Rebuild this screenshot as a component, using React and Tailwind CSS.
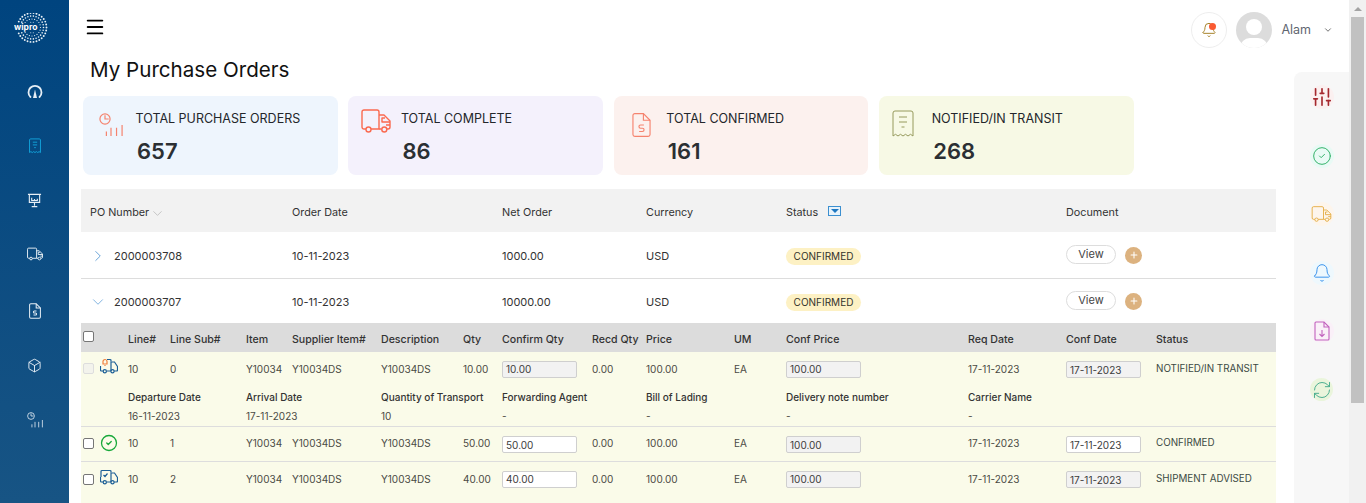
// My Purchase Orders page
import { Bell, Box, ChevronDown, ChevronRight, CircleCheck, Menu, Plus, RefreshCw, SlidersVertical } from 'lucide-react';

const font = { fontFamily: 'Inter, "Noto Sans", sans-serif' };

// clock + bars, used on the first card and in the sidebar
function ReportIcon({ className }) {
  return (
    <svg viewBox="0 0 26 26" fill="none" stroke="currentColor" strokeWidth="1.300" className={className}>
      <circle cx="6.500" cy="6.500" r="5.500" />
      <path d="M6.500 2.500v4h4" />
      <path d="M8 25v-5M13 25v-9M19 25v-9M25 25V13" />
    </svg>
  );
}

function ReceiptIcon({ className, strokeWidth = 1 }) {
  return (
    <svg viewBox="0 0 22 28" fill="none" stroke="currentColor" strokeWidth={strokeWidth} className={className}>
      <path d="M1 26V3a2 2 0 0 1 2-2h16a2 2 0 0 1 2 2v23l-2.500-1.700-2.500 1.700-2.500-1.700L11 26l-2.500-1.700L6 26l-2.500-1.700z" />
      <path d="M7 7h8M7 12h8M9.500 17h3" />
    </svg>
  );
}

function DollarFileIcon({ className, strokeWidth = 1.200 }) {
  return (
    <svg viewBox="0 0 20 26" fill="none" stroke="currentColor" strokeWidth={strokeWidth} className={className}>
      <path d="M12 1H3a2 2 0 0 0-2 2v20a2 2 0 0 0 2 2h14a2 2 0 0 0 2-2V8z" />
      <path d="M12 1v7h7" />
      <path d="M12.500 13h-3.500a1.700 1.700 0 0 0 0 3.400h2a1.700 1.700 0 0 1 0 3.400H7.500" />
    </svg>
  );
}

function DownloadFileIcon({ className }) {
  return (
    <svg viewBox="0 0 16 20" fill="none" stroke="currentColor" strokeWidth="1.100" className={className}>
      <path d="M10 1H2a1 1 0 0 0-1 1v16a1 1 0 0 0 1 1h12a1 1 0 0 0 1-1V6z" />
      <path d="M10 1v5h5" />
      <path d="M8 9v6M5.500 13 8 15.500 10.500 13" />
    </svg>
  );
}

function GaugeIcon({ className }) {
  return (
    <svg viewBox="0 0 16 16" fill="none" className={className}>
      <path d="M3.500 13A6.500 6.500 0 1 1 12.500 13" stroke="currentColor" strokeWidth="1.800" strokeLinecap="round" />
      <path d="M8 5.500 10 14H6z" fill="currentColor" />
    </svg>
  );
}

function BoardIcon({ className }) {
  return (
    <svg viewBox="0 0 16 16" fill="none" stroke="currentColor" strokeWidth="1.200" className={className}>
      <path d="M1 1.500h14M2.500 1.500v8.500h11V1.500M8 10v3.500M5 14.500h6" />
      <path d="M5 5v3h6V6M8 8V6.500" />
    </svg>
  );
}

function TruckIcon({ className, strokeWidth = 1.300 }) {
  return (
    <svg viewBox="0 0 30 24" fill="none" stroke="currentColor" strokeWidth={strokeWidth} strokeLinejoin="round" className={className}>
      <path d="M5 20H3a2 2 0 0 1-2-2V3a2 2 0 0 1 2-2h13a2 2 0 0 1 2 2v17H10" />
      <path d="M18 6h5l6 6v6a2 2 0 0 1-2 2h-1M20.500 20H18" />
      <path d="M24 9h-3v4h8M25 16h4" />
      <circle cx="7.500" cy="20.500" r="2.500" />
      <circle cx="23.300" cy="20.500" r="2.500" />
    </svg>
  );
}

// delivery van with a small overlay, for the line status column
function VanIcon({ children }) {
  return (
    <svg viewBox="0 0 18 16" fill="none" stroke="#1c5f96" strokeWidth="1.200" className="w-[18px] h-4">
      <path d="M3 13H1.500a1 1 0 0 1-1-1V8M6.500 13h4.500M14 13h2.500a1 1 0 0 0 1-1V8.500L14.500 4H11v9" />
      <path d="M11 3.500V2.500a1 1 0 0 0-1-1H7" />
      <circle cx="4.800" cy="13.300" r="1.600" />
      <circle cx="12.500" cy="13.300" r="1.600" />
      {children}
    </svg>
  );
}

function WiproLogo() {
  const rings = [
    { r: 14.5, n: 30, s: 0.95 },
    { r: 11.5, n: 26, s: 0.8 },
    { r: 8.5, n: 20, s: 0.6 },
    { r: 5.5, n: 14, s: 0.5 },
  ];
  return (
    <svg viewBox="0 0 36 30" className="w-9 h-[30px]">
      {rings.map((ring) =>
        Array.from({ length: ring.n }).map((_, i) => {
          const a = (i / ring.n) * Math.PI * 2;
          const x = 18 + Math.cos(a) * ring.r;
          const y = 14.5 + Math.sin(a) * ring.r;
          // the word covers the left side of the rings
          if (x < 24 && Math.abs(y - 14.5) < 4.5) return null;
          return <circle key={ring.r + '-' + i} cx={x} cy={y} r={ring.s} fill="#eaf1f7" />;
        })
      )}
      <text x="0" y="17" fontSize="8.500" fontWeight="700" fill="#fff" style={font}>wipro</text>
    </svg>
  );
}

const sideIcons = [
  <GaugeIcon className="w-4 h-4 mt-[2px]" />,
  <ReceiptIcon className="w-3 h-4 text-[#12a5dc]" strokeWidth={1.700} />,
  <BoardIcon className="w-[15px] h-[15px]" />,
  <TruckIcon className="w-4 h-[14px] -mt-[3px]" strokeWidth={1.800} />,
  <DollarFileIcon className="w-3 h-4" strokeWidth={1.700} />,
  <Box className="w-[15px] h-[15px]" strokeWidth={1.500} />,
  <ReportIcon className="w-4 h-4" />,
];

function Sidebar() {
  return (
    <aside className="w-[69px] shrink-0 h-full bg-gradient-to-b from-[#00447f] to-[#175484] text-[#e6eef5] flex flex-col items-center">
      <div className="mt-[13px] h-[30px] ml-[-5px]">
        <WiproLogo />
      </div>
      <nav className="mt-[21px] flex flex-col w-full">
        {sideIcons.map((icon, i) => (
          <div key={i} className="h-[54.800px] flex items-center justify-center">{icon}</div>
        ))}
      </nav>
    </aside>
  );
}

const cards = [
  { label: 'TOTAL PURCHASE ORDERS', value: '657', bg: 'bg-[#eef5fd]', icon: <ReportIcon className="w-6 h-6 text-[#f5836e] mt-[17px] ml-[16px]" /> },
  { label: 'TOTAL COMPLETE', value: '86', bg: 'bg-[#f4f1fc]', icon: <TruckIcon className="w-[30px] h-6 text-[#fa6a50] mt-[13px] ml-[13px]" strokeWidth={1.400} /> },
  { label: 'TOTAL CONFIRMED', value: '161', bg: 'bg-[#fcf1ee]', icon: <DollarFileIcon className="w-[19px] h-[26px] text-[#f5836e] mt-[16px] ml-[18px]" /> },
  { label: 'NOTIFIED/IN TRANSIT', value: '268', bg: 'bg-[#f7f9e5]', icon: <ReceiptIcon className="w-[22px] h-[28px] text-[#969a5c] mt-[14px] ml-[13px]" /> },
];

function StatCard({ card }) {
  return (
    <div className={`w-[254.500px] h-[79px] rounded-lg flex ${card.bg}`}>
      <div className="w-[52.500px] shrink-0">{card.icon}</div>
      <div>
        <div className="mt-[15px] text-[12.500px] leading-4 text-[#23262b]">{card.label}</div>
        <div className="mt-[10px] ml-[1.500px] text-[22px] leading-7 font-semibold text-[#2b2f33]">{card.value}</div>
      </div>
    </div>
  );
}

const poCols = 'grid grid-cols-[211px_210px_144px_140px_280px_210px]';

function Pill() {
  return <span className="inline-flex items-center justify-center w-[75px] h-[17px] rounded-full bg-[#fdf1c4] text-[10px] text-[#33332b]">CONFIRMED</span>;
}

function DocCell() {
  return (
    <div className="flex items-center -mt-[2px]">
      <button className="w-[50px] h-[19px] rounded-full border border-[#ddd] bg-white text-[11px] leading-3 text-[#444] -mt-[2px]">View</button>
      <span className="ml-[9px] w-[17px] h-[17px] rounded-full bg-[#dcb27f] text-white flex items-center justify-center">
        <Plus className="w-[10px] h-[10px]" strokeWidth={2.500} />
      </span>
    </div>
  );
}

function PoRow({ number, date, amount, open }) {
  return (
    <div className={`${poCols} items-center pt-[2px] text-[11px] text-[#333] ${open ? 'h-[44px]' : 'h-[47px] border-b border-[#ddd]'}`}>
      <div className="flex items-center pl-[8px]">
        {open
          ? <ChevronDown className="w-[18px] h-[18px] text-[#5a9bd5] mr-[7px]" strokeWidth={1} />
          : <ChevronRight className="w-[18px] h-[18px] text-[#5a9bd5] mr-[7px]" strokeWidth={1.200} />}
        {number}
      </div>
      <div>{date}</div>
      <div>{amount}</div>
      <div>USD</div>
      <div><Pill /></div>
      <DocCell />
    </div>
  );
}

// checkbox, icon, then the columns of the expanded lines
const lineCols = 'grid grid-cols-[19px_28px_42px_76px_46px_89px_82px_39px_90px_54px_88px_52px_182px_98px_90px_120px]';

function ValueBox({ value, off, up, date }) {
  return (
    <div className={`w-[75px] h-[17px] rounded-[2px] border border-[#cfcfcf] pl-[3px] flex items-center text-[10px] text-[#3c3c3c] ${off ? 'bg-[#f2f2f2]' : 'bg-white'} ${up ? 'mt-[2px] pt-[2px]' : ''} ${date && !up ? 'pt-[3px]' : ''}`}>
      {value}
    </div>
  );
}

function LineRow({ icon, iconClass, boxClass, sub, qty, status, disabled, qtyOff, dateOff, up }) {
  return (
    <div className={`${lineCols} h-[34px] items-center text-[10px] text-[#4a4a44] ${up ? 'pb-[2px]' : ''}`}>
      <input type="checkbox" readOnly className={`w-[11px] h-[11px] ml-[2px] appearance-none rounded-[2px] border ${boxClass} ${disabled ? 'border-[#ddd] bg-[#f3f3ec]' : 'border-[#767676] bg-white'}`} />
      <div className={`flex items-center ${iconClass}`}>{icon}</div>
      <div>10</div>
      <div>{sub}</div>
      <div>Y10034</div>
      <div>Y10034DS</div>
      <div>Y10034DS</div>
      <div>{qty}</div>
      <ValueBox value={qty} off={qtyOff} up={up} />
      <div>0.00</div>
      <div>100.00</div>
      <div>EA</div>
      <ValueBox value="100.00" off up={up} />
      <div>17-11-2023</div>
      <ValueBox value="17-11-2023" off={dateOff} up={up} date />
      <div className="text-[#3c4a44] text-[9.800px]">{status}</div>
    </div>
  );
}

const transport = [
  { label: 'Departure Date', value: '16-11-2023', span: 'col-start-3 col-span-2' },
  { label: 'Arrival Date', value: '17-11-2023', span: 'col-span-2' },
  { label: 'Quantity of Transport', value: '10', span: 'col-span-2' },
  { label: 'Forwarding Agent', value: '-', span: 'col-span-2' },
  { label: 'Bill of Lading', value: '-', span: 'col-span-2' },
  { label: 'Delivery note number', value: '-', span: 'col-span-1' },
  { label: 'Carrier Name', value: '-', span: 'col-span-1' },
];

function TransportRow() {
  return (
    <div className={`${lineCols} h-[41px] pt-[2px] border-b border-[#ddd] text-[10px]`}>
      {transport.map((t) => (
        <div key={t.label} className={t.span}>
          <div className="h-[19px] leading-[19px] font-medium text-[#333]">{t.label}</div>
          <div className="h-[19px] leading-[19px] text-[#4a4a44]">{t.value}</div>
        </div>
      ))}
    </div>
  );
}

function PoTable() {
  const lineHead = ['Line#', 'Line Sub#', 'Item', 'Supplier Item#', 'Description', 'Qty', 'Confirm Qty', 'Recd Qty', 'Price', 'UM', 'Conf Price', 'Req Date', 'Conf Date', 'Status'];
  return (
    <div className="w-[1195px] ml-[12px] mt-[14px]">
      <div className={`${poCols} h-[43px] pt-[6px] items-center bg-[#f2f2f2] text-[10.800px] text-[#333]`}>
        <div className="pl-[9px] flex items-center">PO Number<ChevronDown className="w-[15px] h-[15px] ml-px text-[#999]" strokeWidth={0.800} /></div>
        <div>Order Date</div>
        <div>Net Order</div>
        <div>Currency</div>
        <div className="flex items-center">
          Status
          <span className="ml-[10px] -mt-[5px] w-[13px] h-[10px] border border-[#3b8fd0] bg-[#e8f3fb] flex items-center justify-center">
            <span className="w-0 h-0 border-l-[4px] border-r-[4px] border-t-[4px] border-l-transparent border-r-transparent border-t-[#1e78c2]" />
          </span>
        </div>
        <div>Document</div>
      </div>
      <PoRow number="2000003708" date="10-11-2023" amount="1000.00" />
      <PoRow number="2000003707" date="10-11-2023" amount="10000.00" open />

      <div className={`${lineCols} h-[29px] pt-[4px] items-center bg-[#dcdcdc] text-[10.600px] font-medium text-[#333]`}>
        <input type="checkbox" readOnly className="w-[11px] h-[11px] ml-[2px] -mt-[7px] appearance-none rounded-[2px] border border-[#767676] bg-white" />
        <div />
        {lineHead.map((h) => <div key={h}>{h}</div>)}
      </div>
      <div className="bg-[#fafbe9] h-[151px]">
        <LineRow
          sub="0" qty="10.00" status="NOTIFIED/IN TRANSIT" disabled qtyOff dateOff
          iconClass="-mt-[6px]" boxClass="-mt-[2px]"
          icon={<VanIcon><path d="M5 1.500a2 2 0 0 1 2 2V6H3V3.500a2 2 0 0 1 2-2zM2.500 6h5M5 7v1" stroke="#f0803c" fill="#fafbe9" /></VanIcon>}
        />
        <TransportRow />
        <div className="border-b border-[#ddd]">
          <LineRow
            sub="1" qty="50.00" status="CONFIRMED" up
            icon={<CircleCheck className="w-[18px] h-[18px] text-[#17a83a]" strokeWidth={1.700} />}
          />
        </div>
        <LineRow
          sub="2" qty="40.00" status="SHIPMENT ADVISED" dateOff
          iconClass="-mt-[4px]"
          icon={<VanIcon><path d="M1 8V2.500a1 1 0 0 1 1-1h5M3.500 6 5 7.500 7.500 4.500" /></VanIcon>}
        />
      </div>
    </div>
  );
}

const railIcons = [
  <span className="w-6 h-6 rounded-full bg-[#fbf0f0] flex items-center justify-center"><SlidersVertical className="w-[22px] h-[22px] text-[#a5282e]" strokeWidth={1.800} /></span>,
  <span className="w-6 h-6 rounded-full bg-[#e9faf5] flex items-center justify-center"><CircleCheck className="w-5 h-5 text-[#35b36b]" strokeWidth={1.200} /></span>,
  <span className="w-6 h-6 rounded-full bg-[#fdf5ec] flex items-center justify-center"><TruckIcon className="w-[21px] h-[16px] text-[#e3a93c]" /></span>,
  <span className="w-6 h-6 rounded-full bg-[#eef8fd] flex items-center justify-center"><Bell className="w-5 h-5 text-[#3b94ee]" strokeWidth={1.200} /></span>,
  <span className="w-6 h-6 rounded-full bg-[#faf0f8] flex items-center justify-center"><DownloadFileIcon className="w-4 h-5 text-[#c262bd]" /></span>,
  <span className="w-[23px] h-[23px] rounded-full bg-[#eaf5dc] flex items-center justify-center"><RefreshCw className="w-5 h-5 text-[#3fa98a]" strokeWidth={1.100} /></span>,
];

function RightRail() {
  return (
    <div className="w-[55px] shrink-0 mt-[72px] bg-[#f7f7f7] rounded-tl-lg flex flex-col items-center">
      {railIcons.map((icon, i) => (
        <div key={i} className={`h-[58.500px] w-full flex items-center justify-center ${i === 0 ? '-mt-[4px]' : ''}`}>{icon}</div>
      ))}
    </div>
  );
}

export default function App() {
  return (
    <div className="w-[1366px] h-[503px] overflow-hidden flex bg-white" style={font}>
      <Sidebar />
      <main className="w-[1225px] shrink-0 relative">
        <header className="h-[60px] flex items-start">
          <Menu className="ml-[15px] mt-[16px] w-[22px] h-[22px] text-black" strokeWidth={2} />
          <div className="ml-auto mr-[-39px] mt-[12px] flex items-center">
            <div className="w-9 h-9 rounded-full border border-[#eee] flex items-center justify-center relative">
              <Bell className="w-4 h-4 text-[#a8842c]" strokeWidth={1.500} />
              <span className="absolute top-[10px] right-[10px] w-[7px] h-[7px] rounded-full bg-[#fa5a32]" />
            </div>
            <div className="ml-[9px] w-9 h-9 rounded-full bg-[#dcdcdc] relative overflow-hidden">
              <span className="absolute left-[10px] top-[7px] w-4 h-4 rounded-full bg-white" />
              <span className="absolute left-[4px] top-[26px] w-7 h-5 rounded-full bg-white" />
            </div>
            <span className="ml-[9px] text-[12.500px] text-[#5f6670]">Alam</span>
            <ChevronDown className="ml-[12px] w-[10px] h-[10px] text-[#555]" strokeWidth={2} />
          </div>
        </header>
        <h1 className="ml-[21px] text-[20.600px] leading-5 font-normal text-[#111]">My Purchase Orders</h1>
        <div className="ml-[14px] mt-[16px] flex gap-[10.900px]">
          {cards.map((c) => <StatCard key={c.label} card={c} />)}
        </div>
        <PoTable />
      </main>
      <RightRail />
      <div className="w-[17px] shrink-0 bg-[#f1f1f1] flex flex-col items-center">
        <div className="h-[17px] flex items-center justify-center">
          <span className="w-0 h-0 border-l-[4px] border-r-[4px] border-b-[4px] border-l-transparent border-r-transparent border-b-[#a3a3a3]" />
        </div>
        <div className="w-[13px] h-[386px] bg-[#c1c1c1]" />
      </div>
    </div>
  );
}
